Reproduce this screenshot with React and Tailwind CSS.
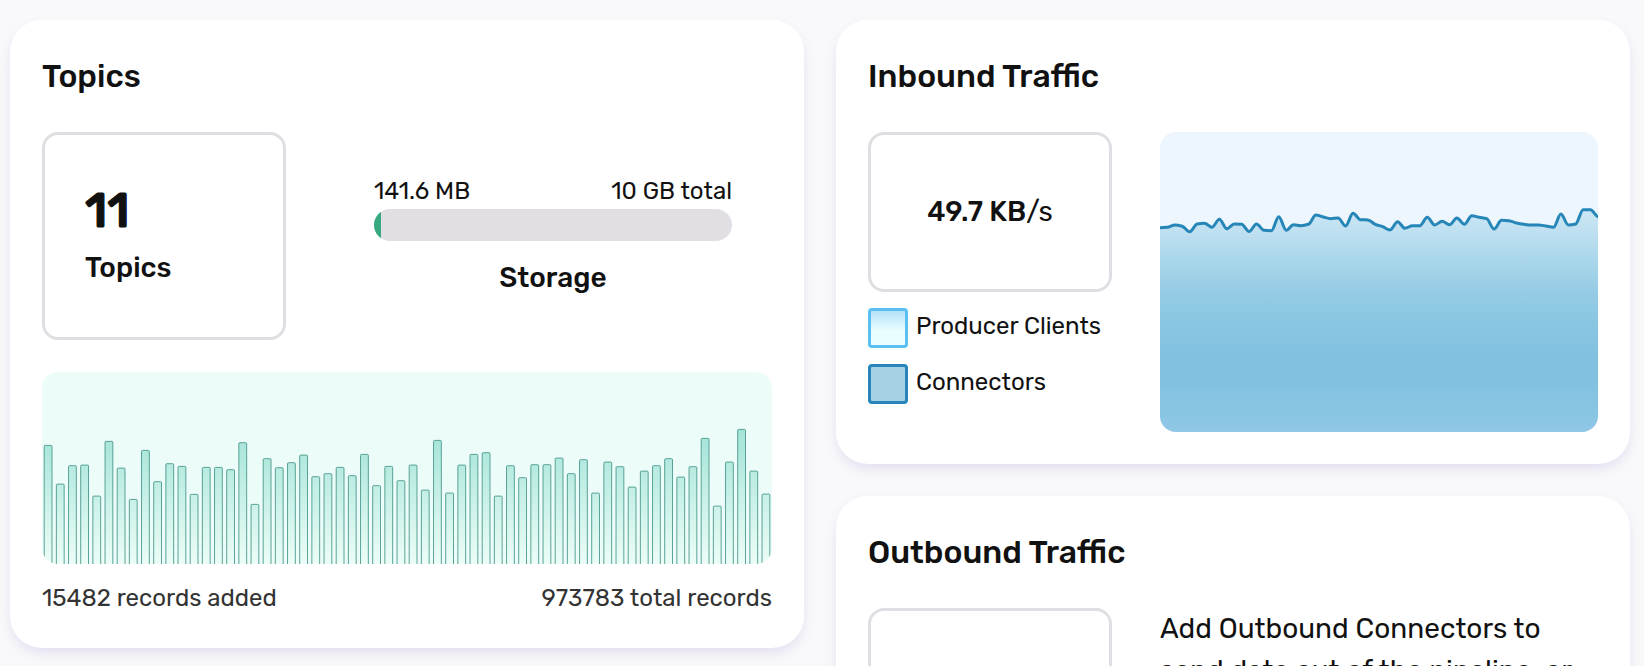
import React from 'react';

const RECORD_BARS = [
  119, 80.3, 98.7, 99.3, 68.3, 123, 96.3, 65, 114, 82.7, 100.7, 98, 70, 97, 97, 94.7, 121.7, 60, 105.7, 96.7,
  101.7, 109.3, 87.7, 90.7, 97, 88.7, 110, 78.7, 98, 83.7, 99.3, 74.3, 124, 71.3, 99.3, 110, 111.7, 68.3, 98.7, 86.7,
  99.7, 99.7, 106.3, 90.7, 104.7, 71.3, 102.3, 97.7, 77.3, 93.3, 98.7, 105.7, 87.3, 97.7, 126, 58.3, 102.3, 135, 93.3, 70.3,
];

const INBOUND_POINTS = [
  95.7, 95.3, 93, 94.3, 99.7, 92, 91.2, 95.3, 87.3, 96.7, 92, 92.3, 99.5, 92, 98.3, 98.7, 84.7, 98.3, 92.7, 93.7,
  92.3, 83, 85, 86.7, 86, 94, 81.3, 87.7, 88, 92.3, 94.7, 98, 89.7, 96.3, 93.7, 93.7, 85.3, 93, 89.3, 92.7,
  86, 92.3, 83.7, 85.3, 86.7, 97, 88.3, 88.7, 91, 92.3, 93, 93, 94, 95.3, 82, 93, 92, 77.7, 77.7, 84.5,
];

// monotone cubic through evenly spaced points
function smoothPath(points, width) {
  const step = width / (points.length - 1);
  const slopes = points.map((p, i) => {
    if (i === 0 || i === points.length - 1) return 0;
    const before = p - points[i - 1];
    const after = points[i + 1] - p;
    if (before * after <= 0) return 0;
    return (2 * before * after) / (before + after);
  });
  let d = `M0 ${points[0]}`;
  for (let i = 1; i < points.length; i++) {
    const x0 = (i - 1) * step;
    const x1 = i * step;
    d += ` C${x0 + step / 3} ${points[i - 1] + slopes[i - 1] / 3} ${x1 - step / 3} ${points[i] - slopes[i] / 3} ${x1} ${points[i]}`;
  }
  return d;
}

const Card = ({ title, className = '', children }) => (
  <section className={`rounded-[32px] bg-white px-8 pt-8 shadow-[0_6px_14px_-2px_rgba(88,50,170,0.15)] ${className}`}>
    <h2 className="mb-8 h-12 text-[32px] leading-[48px] font-medium">{title}</h2>
    {children}
  </section>
);

const RecordsChart = () => {
  const step = 730 / RECORD_BARS.length;
  return (
    <svg width="730" height="192" viewBox="0 0 730 192" className="block rounded-2xl bg-[#ecfcf8]">
      <defs>
        <linearGradient id="records" gradientUnits="userSpaceOnUse" x1="0" y1="57" x2="0" y2="192">
          <stop offset="0" stopColor="#a2e3d7" />
          <stop offset="1" stopColor="#ecfdf7" />
        </linearGradient>
      </defs>
      {RECORD_BARS.map((h, i) => {
        const x = i * step + 2.2;
        const y = 192.4 - h;
        return (
          <path
            key={i}
            d={`M${x} 194 V${y + 1} Q${x} ${y} ${x + 1} ${y} H${x + 6.8} Q${x + 7.8} ${y} ${x + 7.8} ${y + 1} V194`}
            fill="url(#records)"
            stroke="#429388"
            strokeWidth="0.85"
          />
        );
      })}
    </svg>
  );
};

const TrafficChart = () => {
  const line = smoothPath(INBOUND_POINTS, 438);
  return (
    <svg width="438" height="300" viewBox="0 0 438 300" className="block shrink-0 rounded-2xl bg-[#edf5fd]">
      <defs>
        <linearGradient id="inbound" gradientUnits="userSpaceOnUse" x1="0" y1="0" x2="0" y2="300">
          <stop offset="0.26" stopColor="#cbe7f4" />
          <stop offset="0.33" stopColor="#bfe0f1" />
          <stop offset="0.4" stopColor="#afd9ec" />
          <stop offset="0.52" stopColor="#97cde5" />
          <stop offset="0.65" stopColor="#88c5e2" />
          <stop offset="0.74" stopColor="#82c2e0" />
          <stop offset="0.84" stopColor="#82c2e0" />
          <stop offset="0.93" stopColor="#88c5e3" />
          <stop offset="1" stopColor="#90c7e5" />
        </linearGradient>
      </defs>
      <path d={`${line} V300 H0 Z`} fill="url(#inbound)" />
      <path d={line} fill="none" stroke="#2586b7" strokeWidth="3" strokeLinejoin="round" />
    </svg>
  );
};

const LegendItem = ({ swatch, children }) => (
  <div className="mt-4 flex h-10 gap-2">
    <span className={`size-10 shrink-0 rounded border-3 ${swatch}`} />
    <span className="text-2xl leading-9 whitespace-nowrap">{children}</span>
  </div>
);

const TopicsCard = () => (
  <Card title="Topics" className="h-[628px] w-[794px]">
    <div className="flex h-52">
      <div className="flex w-[244px] flex-col rounded-2xl border-3 border-[#e0dee3] pt-10 pl-10">
        <span className="text-5xl leading-[72px] font-medium [-webkit-text-stroke:1.2px_#111]">11</span>
        <span className="text-[28px] leading-[42px] font-medium">Topics</span>
      </div>
      <div className="mt-[41px] ml-[88px] w-[358px]">
        <div className="flex justify-between text-2xl leading-9">
          <span>141.6 MB</span>
          <span>10 GB total</span>
        </div>
        <div className="h-8 overflow-hidden rounded-full bg-[#e1dfe4]">
          <div className="h-full w-[7px] bg-[#36a980]" />
        </div>
        <div className="mt-4 text-center text-[28px] leading-[42px] font-medium">Storage</div>
      </div>
    </div>
    <div className="mt-8">
      <RecordsChart />
    </div>
    <div className="mt-4 flex justify-between text-2xl leading-9 text-[#333]">
      <span>15482 records added</span>
      <span>973783 total records</span>
    </div>
  </Card>
);

const InboundCard = () => (
  <Card title="Inbound Traffic" className="h-[444px]">
    <div className="flex gap-12">
      <div className="w-[244px]">
        <div className="flex h-40 items-center justify-center rounded-2xl border-3 border-[#e0dee3] text-[28px]">
          <span className="font-medium">49.7 KB</span>/s
        </div>
        <LegendItem swatch="border-[#5bc0f1] bg-linear-to-b from-[#b5e1f8] to-[#e9ffff] to-60%">Producer Clients</LegendItem>
        <LegendItem swatch="border-[#2586b7] bg-[#a5d1e4]">Connectors</LegendItem>
      </div>
      <TrafficChart />
    </div>
  </Card>
);

const OutboundCard = () => (
  <Card title="Outbound Traffic" className="h-[444px]">
    <div className="flex gap-12">
      <div className="h-40 w-[244px] rounded-2xl border-3 border-[#e0dee3]" />
      <p className="text-[28px] leading-[42px] whitespace-nowrap">
        Add Outbound Connectors to
        <br />
        send data out of the pipeline, or
      </p>
    </div>
  </Card>
);

export default function App() {
  return (
    <main className="flex h-[666px] items-start gap-8 overflow-hidden bg-[#f9f9fb] pt-5 pl-2.5 font-['Rubik','Roboto',sans-serif] text-[#111]">
      <TopicsCard />
      <div className="flex w-[794px] flex-col gap-8">
        <InboundCard />
        <OutboundCard />
      </div>
    </main>
  );
}
